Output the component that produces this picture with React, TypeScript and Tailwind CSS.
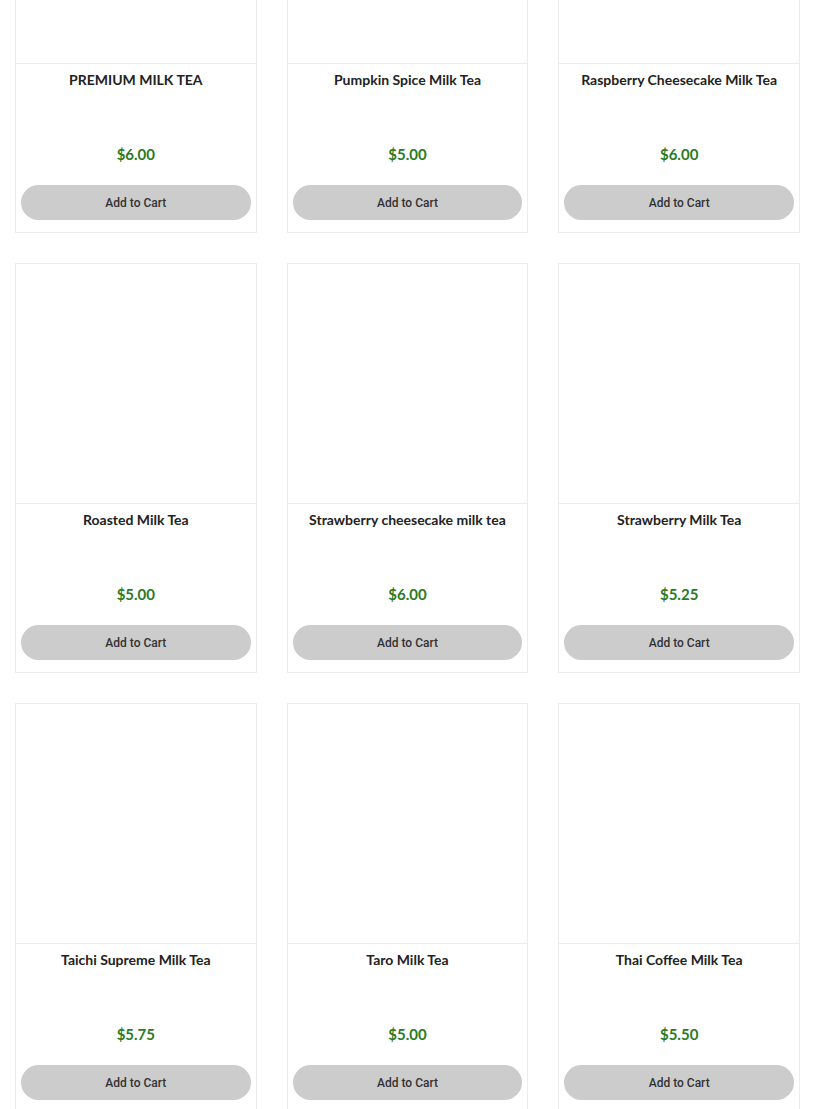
import React from "react";

const products = [
  { name: "PREMIUM MILK TEA", price: "$6.00" },
  { name: "Pumpkin Spice Milk Tea", price: "$5.00" },
  { name: "Raspberry Cheesecake Milk Tea", price: "$6.00" },
  { name: "Roasted Milk Tea", price: "$5.00" },
  { name: "Strawberry cheesecake milk tea", price: "$6.00" },
  { name: "Strawberry Milk Tea", price: "$5.25" },
  { name: "Taichi Supreme Milk Tea", price: "$5.75" },
  { name: "Taro Milk Tea", price: "$5.00" },
  { name: "Thai Coffee Milk Tea", price: "$5.50" },
];

function ProductCard({ name, price }: { name: string; price: string }) {
  return (
    <div className="flex flex-col border border-[#ececec] bg-white">
      <div className="h-[240px] border-b border-[#ececec]" />
      <div className="flex flex-col px-[5px] pb-[12px]">
        <div className="h-[66px] pt-[6px] text-center text-[14px] font-bold leading-[20px] text-[#222] [font-family:Lato,'Noto_Sans',sans-serif]">
          {name}
        </div>
        <div className="flex h-[49px] items-center justify-center text-[15px] font-bold text-[#2b7a1f] [font-family:Lato,'Noto_Sans',sans-serif]">
          {price}
        </div>
        <button className="mt-[6px] h-[35px] w-full rounded-full bg-[#cccccc] text-[12px] font-medium text-[#333] [font-family:Roboto,sans-serif]">
          Add to Cart
        </button>
      </div>
    </div>
  );
}

export default function App() {
  return (
    <div className="min-h-screen overflow-hidden bg-white">
      <div className="-mt-[177px] grid grid-cols-3 gap-x-[30px] gap-y-[30px] px-[15px]">
        {products.map((p, i) => (
          <ProductCard key={i} name={p.name} price={p.price} />
        ))}
      </div>
    </div>
  );
}
